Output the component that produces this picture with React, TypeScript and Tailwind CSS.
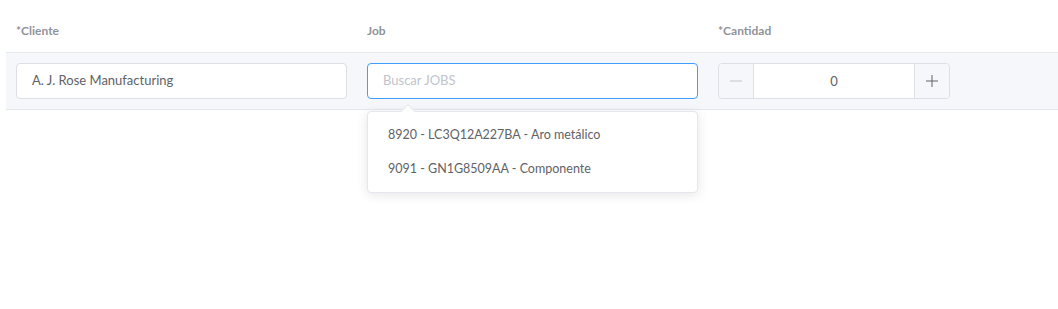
import React from "react";

const App: React.FC = () => {
  return (
    <div className="w-[1058px] h-[309px] bg-white text-[13px] text-[#606266]" style={{ fontFamily: "Lato, 'Noto Sans', sans-serif" }}>
      <div className="flex h-[52px] items-center pl-[16px] pt-[10px] text-[12px] font-bold text-[#909399]">
        <div className="w-[351px] shrink-0">*Cliente</div>
        <div className="w-[351px] shrink-0">Job</div>
        <div className="w-[351px] shrink-0">*Cantidad</div>
      </div>
      <div className="ml-[6px] flex border-y border-[#e4e7ed] bg-[#f5f7fa] py-[10px] pl-[10px]">
        <div className="w-[351px] shrink-0">
          <div className="flex h-[36px] w-[331px] items-center rounded-[4px] border border-[#dcdfe6] bg-white px-[15px]">
            A. J. Rose Manufacturing
          </div>
        </div>
        <div className="relative w-[351px] shrink-0">
          <div className="flex h-[36px] w-[331px] items-center rounded-[4px] border border-[#409eff] bg-white px-[15px] text-[#c0c4cc]">
            Buscar JOBS
          </div>
          <div className="absolute left-0 top-[48px] z-10 w-[331px] rounded-[4px] border border-[#e4e7ed] bg-white py-[6px] text-[12.5px] shadow-[0_2px_12px_0_rgba(0,0,0,0.1)]">
            <div className="absolute -top-[6px] left-[35px] h-[10px] w-[10px] rotate-45 border-l border-t border-[#e4e7ed] bg-white" />
            <div className="flex h-[34px] items-center px-[20px]">8920 - LC3Q12A227BA - Aro metálico</div>
            <div className="flex h-[34px] items-center px-[20px]">9091 - GN1G8509AA - Componente</div>
          </div>
        </div>
        <div className="w-[351px] shrink-0">
          <div className="flex h-[36px] w-[232px] rounded-[4px] border border-[#dcdfe6] bg-white">
            <div className="flex w-[35px] items-center justify-center rounded-l-[4px] border-r border-[#dcdfe6] bg-[#f5f7fa] text-[#c0c4cc]">
              <svg width="14" height="14" viewBox="0 0 14 14"><path d="M1 7h12" stroke="currentColor" strokeWidth="1" /></svg>
            </div>
            <div className="flex flex-1 items-center justify-center pt-[1px]">0</div>
            <div className="flex w-[35px] items-center justify-center rounded-r-[4px] border-l border-[#dcdfe6] bg-[#f5f7fa] text-[#606266]">
              <svg width="14" height="14" viewBox="0 0 14 14"><path d="M1 7h12M7 1v12" stroke="currentColor" strokeWidth="1" /></svg>
            </div>
          </div>
        </div>
      </div>
    </div>
  );
};

export default App;
